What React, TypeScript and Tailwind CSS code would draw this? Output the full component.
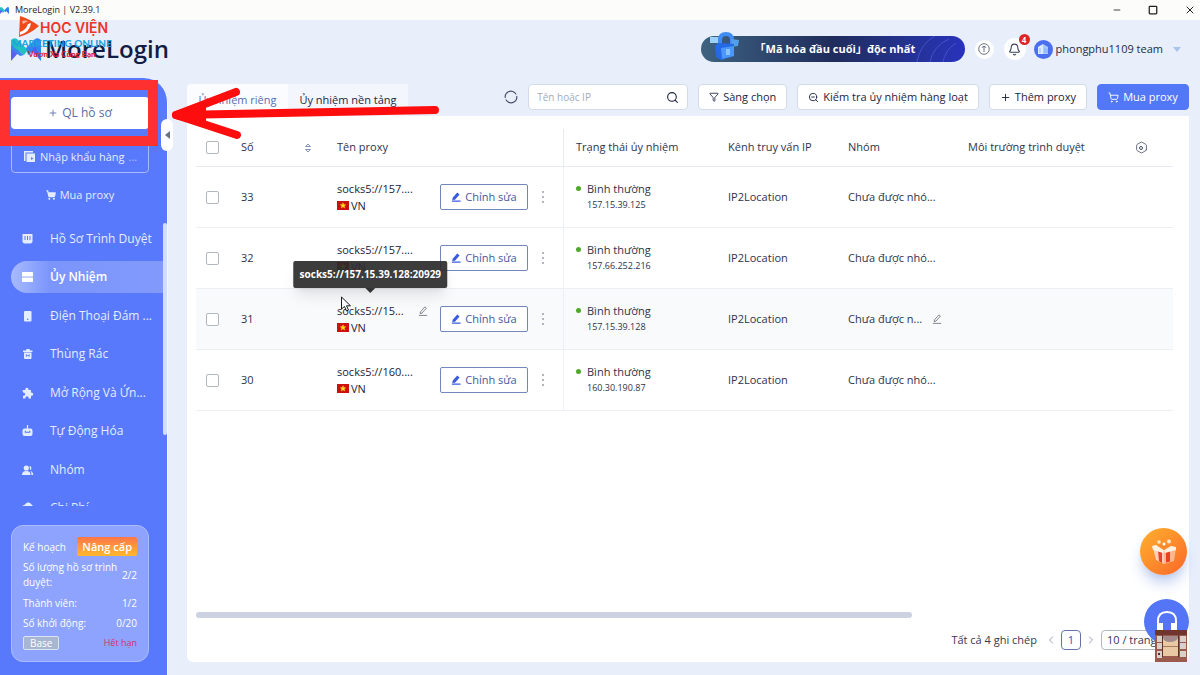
import type { ReactNode } from 'react';
import { clsx } from 'clsx';
import {
  Bell,
  ChevronLeft,
  ChevronRight,
  Filter,
  Hexagon,
  Minus,
  Plus,
  Search,
  ShoppingCart,
  Square,
  X,
  ZoomOut,
} from 'lucide-react';

interface ProxyRow {
  id: number;
  name: string;
  ip: string;
  group: string;
  hovered?: boolean;
}

const PROXIES: ProxyRow[] = [
  { id: 33, name: 'socks5://157....', ip: '157.15.39.125', group: 'Chưa được nhó...' },
  { id: 32, name: 'socks5://157....', ip: '157.66.252.216', group: 'Chưa được nhó...' },
  { id: 31, name: 'socks5://15...', ip: '157.15.39.128', group: 'Chưa được n...', hovered: true },
  { id: 30, name: 'socks5://160....', ip: '160.30.190.87', group: 'Chưa được nhó...' },
];

const NAV_ITEMS: { label: string; icon: ReactNode; active?: boolean }[] = [
  {
    label: 'Hồ Sơ Trình Duyệt',
    icon: (
      <>
        <path d="M1 1h10v8L9.500 10.500h-7L1 9z" />
        <path d="M3.500 3v4M6 3v4M8.500 3v4" stroke="#5879fb" strokeWidth="1" />
      </>
    ),
  },
  {
    label: 'Ủy Nhiệm',
    active: true,
    icon: (
      <>
        <rect x="0.500" y="1" width="11" height="4.600" rx="0.600" />
        <rect x="0.500" y="6.400" width="11" height="4.600" rx="0.600" />
      </>
    ),
  },
  {
    label: 'Điện Thoại Đám ...',
    icon: (
      <>
        <rect x="2.500" y="1" width="7.500" height="10.500" rx="1" />
        <circle cx="6.200" cy="9.300" r="0.800" fill="#5879fb" />
      </>
    ),
  },
  {
    label: 'Thùng Rác',
    icon: (
      <>
        <path d="M1.500 2.500h3L5 1h3l.5 1.500h2.500V4h-9.500zM2.500 4.500h7.500V10q0 1-1 1H3.500q-1 0-1-1z" />
        <path d="M4.800 6v3M7.600 6v3M4.500 7.500h3.500" stroke="#5879fb" strokeWidth="0.700" />
      </>
    ),
  },
  {
    label: 'Mở Rộng Và Ứn...',
    icon: (
      <path d="M1 3h2.800a1.700 1.700 0 1 1 3.200 0H9.500v2.700a1.600 1.600 0 1 1 0 3v2.800H7a1.600 1.600 0 1 0-3 0H1.500V8.700a1.600 1.600 0 1 0 0-3z" />
    ),
  },
  {
    label: 'Tự Động Hóa',
    icon: (
      <>
        <path d="M5.400 0h1.200v3.500H5.400zM3 3.500h6q2 0 2 2V9q0 2-2 2H3q-2 0-2-2V5.500q0-2 2-2z" />
        <path d="M3.800 5.800v1.500h4.400V5.800" fill="none" stroke="#5879fb" strokeWidth="1.100" />
      </>
    ),
  },
  {
    label: 'Nhóm',
    icon: (
      <>
        <circle cx="4.800" cy="4" r="2.600" />
        <path d="M.5 11q0-4 4.300-4t4.300 4zM8 1.800a2.400 2.400 0 0 1 .6 4.500zM9 7q2.700.8 2.700 4H10Q10 8.500 9 7z" />
      </>
    ),
  },
  {
    label: 'Chi Phí',
    icon: <path d="M.5 4 3.500 2.500Q5 0 7 0.500q2 0 2.500 1.500L11.500 4v5h-11z" />,
  },
];

function ToolButton({ children, primary }: { children: ReactNode; primary?: boolean }) {
  return (
    <button
      type="button"
      className={clsx(
        'flex h-[26px] items-center justify-center gap-1 whitespace-nowrap rounded-sm border text-[11px] font-medium',
        primary
          ? 'w-[92px] border-[#5278f8] bg-[#5278f8] text-white'
          : 'border-[#d3dbe9] bg-white px-2.5 text-[#1d2340]',
      )}
    >
      {children}
    </button>
  );
}

function PenLine({ className }: { className?: string }) {
  return (
    <svg viewBox="0 0 12 12" className={className} fill="none" stroke="currentColor" strokeWidth="0.900">
      <path d="M2.500 9.200 3 7l5.300-6 1.800 1.500-5.300 6zM1 11.300h10" />
    </svg>
  );
}

function PenSolid() {
  return (
    <svg viewBox="0 0 12 12" className="size-2.5 text-[#3a5be0]" fill="currentColor">
      <path d="M1.500 9.500 2 7l5.500-6.300L10.300 3 4.800 9.200zM1 10.300h10.500v1.300H1z" />
    </svg>
  );
}

function VnFlag() {
  return (
    <svg viewBox="0 0 12 9" className="h-[9px] w-3">
      <rect width="12" height="9" fill="#cc1010" />
      <path d="m6 1.800.7 1.900h2L7.100 4.900l.6 2L6 5.700 4.300 6.900l.6-2-1.600-1.200h2z" fill="#ffe11a" stroke="#ffe11a" strokeWidth="0.500" />
    </svg>
  );
}

function BrandMark({ className }: { className?: string }) {
  return (
    <svg viewBox="0 0 30 23" className={className}>
      <path d="M0 23V9l4-5 5 9z" fill="#5b63ee" />
      <path d="M0 11V2q3-3 6-1l11 11-4 5-5-4z" fill="#25bfc0" />
      <path d="M0 11V7l13 10-4 1z" fill="#3a86ee" />
      <path d="M30 23V2q-3-3-6-1l-9 9 2 7 6-4z" fill="#2f86f2" />
      <path d="M30 23 21 13l3-6z" fill="#4a62f0" />
    </svg>
  );
}

function TitleBar() {
  return (
    <div className="flex h-5 items-center justify-between bg-[#fcfcfa] text-[#1e1e1e]">
      <div className="flex items-center gap-1.5 text-[9px] font-medium">
        <BrandMark className="h-[7px] w-[9px]" />
        <span>MoreLogin | V2.39.1</span>
      </div>
      <div className="flex items-center gap-[26px] pr-1">
        <button type="button" aria-label="Minimize"><Minus size={10} strokeWidth={2} /></button>
        <button type="button" aria-label="Maximize"><Square size={10} strokeWidth={3} /></button>
        <button type="button" aria-label="Close"><X size={12} strokeWidth={2} /></button>
      </div>
    </div>
  );
}

// Academy watermark stamped over the app logo
function Watermark() {
  return (
    <div className="pointer-events-none absolute left-3 top-4 font-[Lato,sans-serif] font-black">
      <svg viewBox="0 0 22 22" className="absolute left-1.5 top-0 size-[22px]">
        <path d="M2 0q10 3 19 10Q12 18 1 21z" fill="#f04a1c" />
        <path d="M2 16Q8 14 10 8l3-1q-1 9-11 12z" fill="#fff" />
        <path d="M4 5q3-1 6 0l-5 3z" fill="#ffb39a" />
      </svg>
      <p className="pl-7 pt-1 font-[Inter,sans-serif] text-[14px] leading-4 font-semibold text-[#ee3524]">HỌC VIỆN</p>
      <p className="text-[10px] leading-3.5 text-[#20a3e0]">MARKETING ONLINE</p>
      <p className="pl-4 text-[8px] leading-2 text-[#dd2431]">Vươn Xa Cùng Bạn</p>
    </div>
  );
}

function Header() {
  return (
    <header className="relative flex h-[58px] items-center justify-between pl-[11px] pr-[19px]">
      <div className="flex items-center gap-1">
        <BrandMark className="h-[23px] w-[30px]" />
        <span className="text-[24px] leading-8 font-semibold text-[#131c46]">MoreLogin</span>
      </div>
      <div className="flex items-center">
        <a
          href="#encryption"
          className="relative mr-2.5 flex h-[26px] w-[264px] items-center rounded-full bg-linear-to-r from-[#3e6380] via-[#202c5c] to-[#2932bd] pl-[54px] text-[11px] font-bold text-white"
        >
          <svg viewBox="0 0 32 28" className="absolute -top-1 left-2 h-7 w-8">
            <path d="M1 5h10v6H1z" fill="#9bd0fb" />
            <path d="M11 13V8q0-6 6-6t6 6v4" fill="none" stroke="#3f8cf5" strokeWidth="4" />
            <path d="M22 7l8 1-1 6-6 1z" fill="#559ee9" />
            <path d="M6 14l3-3 16 1v12l-13 4-5-3z" fill="#2568e8" />
            <path d="M12 16l13-2v10l-12 3z" fill="#4b97fb" />
            <path d="M17 17h4v6h-4z" fill="#8cc2ff" />
          </svg>
          「Mã hóa đầu cuối」độc nhất
          <svg viewBox="0 0 60 26" className="absolute right-0 top-0 h-[26px] w-[60px]" fill="none" stroke="#4153c8">
            <path d="M12 26Q15 8 30 0M25 26Q28 10 44 3M38 26q2-12 13-19" />
          </svg>
        </a>
        <button type="button" aria-label="Tải lên" className="mr-2.5 flex size-[19px] items-center justify-center rounded-full bg-white text-[#4a5168]">
          <svg viewBox="0 0 12 12" className="size-3" fill="none" stroke="currentColor" strokeWidth="0.800">
            <circle cx="6" cy="6" r="5.300" />
            <path d="M3.800 4.500 6 3.300l2.200 1.200M6 3.500V9" />
          </svg>
        </button>
        <button type="button" aria-label="Thông báo" className="relative mr-2 flex size-[22px] items-center justify-center rounded-full bg-white text-[#3b415b]">
          <Bell size={13} strokeWidth={2} />
          <span className="absolute -top-1 -right-1 flex size-[11px] items-center justify-center rounded-full bg-[#dc2626] text-[8px] font-bold text-white">4</span>
        </button>
        <button type="button" className="flex items-center gap-0.5 text-[11px] text-[#252b43]">
          <span className="mr-px flex size-[19px] items-center justify-center rounded-full bg-[#4c6ff0]">
            <svg viewBox="0 0 12 12" className="size-3">
              <path d="M1 4l5-3v10H1z" fill="#dcecff" />
              <path d="M6 1l5 3v7H6z" fill="#a7cbff" />
              <path d="M3 5v5M8 5v5M10 6v4" stroke="#6f97f4" strokeWidth="0.600" />
            </svg>
          </span>
          phongphu1109 team
          <svg viewBox="0 0 8 5" className="ml-2 h-[5px] w-2" fill="#a9c3ea"><path d="M0 0h8L4 5z" /></svg>
        </button>
      </div>
    </header>
  );
}

function PlanCard() {
  return (
    <section className="mr-[18px] ml-[11px] mb-[13px] flex h-[137px] flex-col justify-between rounded-xl border border-[#a9bcfd] bg-[#8ea3fd] px-[11px] pt-[11px] pb-2.5 text-[10px] leading-4 font-medium text-white">
      <div className="flex items-center justify-between">
        Kế hoạch
        <button type="button" className="h-[19px] rounded-xs bg-linear-to-b from-[#ff7548] to-[#ffb829] px-[5px] text-[11px] font-semibold">Nâng cấp</button>
      </div>
      <div className="flex items-center justify-between">
        <span className="leading-[15px]">Số lượng hồ sơ trình<br />duyệt:</span>
        <span>2/2</span>
      </div>
      <div className="flex justify-between"><span>Thành viên:</span><span>1/2</span></div>
      <div className="flex justify-between"><span>Số khởi động:</span><span>0/20</span></div>
      <div className="flex items-center justify-between">
        <span className="flex h-3.5 items-center rounded-xs border border-[#dbe4f4] bg-[#a7b6d3] px-1.5">Base</span>
        <span className="text-[9px] text-[#d92e6b]">Hết hạn</span>
      </div>
    </section>
  );
}

function Sidebar() {
  return (
    <aside className="relative flex w-[168px] shrink-0 flex-col rounded-tr-3xl border-r border-[#f3f7ff] bg-[#5879fb] text-[#e3edff]">
      <div className="flex flex-col items-stretch gap-3 pt-[19px] pr-[18px] pl-[11px]">
        <button type="button" className="flex h-8 items-center justify-center gap-1 rounded-sm bg-white text-[12px] text-[#5a6ba6]">
          <Plus size={10} strokeWidth={2} /> QL hồ sơ
        </button>
        <button type="button" className="flex h-8 items-center gap-1 rounded-sm border border-[#a7bbfd] pl-3 text-[11px] font-medium">
          <svg viewBox="0 0 12 12" className="size-3" fill="currentColor">
            <path d="M0 0h9v1.500H1.500V10H0z" />
            <path d="M2.500 2.500H11V11H2.500z" />
            <path d="M7 6v3l2.500-1.500z" fill="#5879fb" />
          </svg>
          Nhập khẩu hàng <span className="opacity-60">...</span>
        </button>
        <button type="button" className="flex h-5 items-center justify-center gap-1 text-[11px] font-medium">
          <ShoppingCart size={10} strokeWidth={3} fill="currentColor" /> Mua proxy
        </button>
      </div>
      <nav className="mt-[18px] h-[283px] overflow-hidden">
        <ul className="flex h-[301px] flex-col justify-between">
          {NAV_ITEMS.map((item) => (
            <li key={item.label}>
              <a
                href="#nav"
                className={clsx(
                  'ml-[11px] flex h-8 items-center gap-4 rounded-l-full pl-2.5 text-[12px]',
                  item.active && 'bg-linear-to-r from-[#a8bafd] via-[#7b95fc] via-25% to-[#829afc] font-semibold text-white',
                )}
              >
                <svg viewBox="0 0 12 12" className="h-3 w-[13px]" fill="currentColor">{item.icon}</svg>
                <span className="whitespace-nowrap">{item.label}</span>
              </a>
            </li>
          ))}
        </ul>
      </nav>
      <div className="mt-auto"><PlanCard /></div>
      <span className="absolute top-[145px] right-0 h-[212px] w-1 rounded-full bg-[#cfdefc]" />
      <button type="button" aria-label="Thu gọn" className="absolute top-[41px] -right-1.5 flex h-8 w-3 items-center justify-center rounded-full bg-white">
        <svg viewBox="0 0 5 8" className="h-2 w-[5px]" fill="#6c7180"><path d="M5 0v8L0 4z" /></svg>
      </button>
    </aside>
  );
}

function Toolbar() {
  return (
    <div className="flex items-start justify-between pt-1.5">
      <div role="tablist" className="flex h-8 text-[11px] font-medium whitespace-nowrap">
        <button type="button" role="tab" aria-selected className="w-[101px] rounded-tl-sm bg-[#fbfcff] text-[#5a6db0]">Ủy nhiệm riêng</button>
        <button type="button" role="tab" aria-selected={false} className="w-[120px] bg-[#f3f6fd] text-[#23283d]">Ủy nhiệm nền tảng</button>
      </div>
      <div className="flex items-center gap-2.5">
        <button type="button" aria-label="Làm mới" className="text-[#4a5067]">
          <svg viewBox="0 0 14 14" className="size-3.5" fill="none" stroke="currentColor" strokeWidth="1.100">
            <path d="M1.300 8A5.700 5.700 0 0 1 10.500 2.500l1.800 2M12.700 6A5.700 5.700 0 0 1 3.500 11.500l-1.800-2" />
          </svg>
        </button>
        <label className="flex h-[26px] w-40 items-center rounded-sm border border-[#d3dbe9] bg-white px-2">
          <input type="text" placeholder="Tên hoặc IP" aria-label="Tên hoặc IP" className="min-w-0 flex-1 text-[10px] outline-none placeholder:text-[#a5abb8]" />
          <Search size={13} strokeWidth={2} className="text-[#1d2340]" />
        </label>
        <ToolButton><Filter size={10} strokeWidth={2} />Sàng chọn</ToolButton>
        <ToolButton><ZoomOut size={11} strokeWidth={2} />Kiểm tra ủy nhiệm hàng loạt</ToolButton>
        <ToolButton><Plus size={11} strokeWidth={2} />Thêm proxy</ToolButton>
        <ToolButton primary><ShoppingCart size={11} strokeWidth={2} />Mua proxy</ToolButton>
      </div>
    </div>
  );
}

function NameTooltip() {
  return (
    <span role="tooltip" className="absolute bottom-full left-1/2 z-10 mb-3.5 w-max -translate-x-1/2 rounded-xs bg-[#2b2b2b]/92 px-1.5 py-[5px] text-[10px] leading-[17px] font-bold text-white shadow-lg">
      socks5://157.15.39.128:20929
      <svg viewBox="0 0 10 5" className="absolute top-full left-1/2 h-[5px] w-2.5 -translate-x-1/2" fill="#333333"><path d="M0 0h10L5 5z" /></svg>
    </span>
  );
}

function ProxyTableRow({ row }: { row: ProxyRow }) {
  return (
    <tr className={clsx('h-[61px] *:border-b *:border-[#eceff4]', row.hovered && 'bg-[#f9fafb]')}>
      <td className="text-center"><CheckBox label={`Chọn ${row.id}`} /></td>
      <td className="pl-[13px]">{row.id}</td>
      <td className="border-r border-r-[#eef0f4] pl-[13px]">
        <div className="flex items-center">
          <div className="w-[103px] leading-[17px] text-[#1b2138]">
            <div className="flex items-center justify-between pr-3">
              <span className="relative font-medium">
                {row.name}
                {row.hovered && <NameTooltip />}
                {row.hovered && (
                  <svg viewBox="0 0 11 16" className="absolute -top-1.5 left-1 h-4 w-[11px]" fill="#fff" stroke="#1b1b1b">
                    <path d="M.5 1v12l3-2.500L5.500 15l2-1-2-4.200h4z" />
                  </svg>
                )}
              </span>
              {row.hovered && <button type="button" aria-label="Sửa tên"><PenLine className="size-2.5 text-[#5c6270]" /></button>}
            </div>
            <div className="flex items-center gap-0.5"><VnFlag />VN</div>
          </div>
          <button type="button" className="flex h-[26px] w-[88px] items-center justify-center gap-1 rounded-xs border border-[#7387bd] bg-white text-[#44589f]">
            <PenSolid />
            Chỉnh sửa
          </button>
          <button type="button" aria-label="Thêm" className="ml-3.5">
            <svg viewBox="0 0 2 14" className="h-3.5 w-0.5" fill="#555b6c">
              <circle cx="1" cy="2" r="0.800" />
              <circle cx="1" cy="7" r="0.800" />
              <circle cx="1" cy="12" r="0.800" />
            </svg>
          </button>
        </div>
      </td>
      <td className="pl-3">
        <div className="flex gap-1.5 leading-4">
          <span className="mt-[5px] size-[5px] rounded-full bg-[#4fa82b]" />
          <div>
            <div>Bình thường</div>
            <div className="text-[9px]">{row.ip}</div>
          </div>
        </div>
      </td>
      <td className="pl-3">IP2Location</td>
      <td className="pl-3 whitespace-nowrap">
        <div className="flex items-center gap-2.5">
          {row.group}
          {row.hovered && <button type="button" aria-label="Sửa nhóm"><PenLine className="size-2.5 text-[#5c6270]" /></button>}
        </div>
      </td>
      <td />
      <td />
    </tr>
  );
}

function CheckBox({ label }: { label: string }) {
  return (
    <input type="checkbox" aria-label={label} className="mx-auto block size-[13px] appearance-none rounded-xs border border-[#b3b7c0] bg-white" />
  );
}

function ProxyTable() {
  return (
    <table className="w-full table-fixed border-separate border-spacing-0 text-left text-[11px] text-[#2d334b]">
      <colgroup>
        <col className="w-8" />
        <col className="w-24" />
        <col className="w-60" />
        <col className="w-[152px]" />
        <col className="w-[120px]" />
        <col className="w-[120px]" />
        <col />
        <col className="w-16" />
      </colgroup>
      <thead>
        <tr className="h-[38px] whitespace-nowrap text-[#2c3350] *:border-b *:border-[#e7eaf0] *:font-medium">
          <th><CheckBox label="Chọn tất cả" /></th>
          <th className="pr-3 pl-[13px]">
            <div className="flex items-center justify-between">
              Số
              <svg viewBox="0 0 8 10" className="h-2.5 w-2" fill="none" stroke="#8195b5"><path d="M1.500 3.500 4 1l2.500 2.500zM1.500 6.500 4 9l2.500-2.500z" /></svg>
            </div>
          </th>
          <th className="border-r border-r-[#eef0f4] pl-[13px]">Tên proxy</th>
          <th className="pl-3">Trạng thái ủy nhiệm</th>
          <th className="pl-3">Kênh truy vấn IP</th>
          <th className="pl-3">Nhóm</th>
          <th className="pl-3">Môi trường trình duyệt</th>
          <th>
            <button type="button" aria-label="Cài đặt cột" className="relative mx-auto flex size-3.5 items-center justify-center text-[#4a5168]">
              <Hexagon size={13} strokeWidth={1.5} />
              <span className="absolute size-1 rounded-full border border-current" />
            </button>
          </th>
        </tr>
      </thead>
      <tbody>
        {PROXIES.map((row) => <ProxyTableRow key={row.id} row={row} />)}
      </tbody>
    </table>
  );
}

function Pagination() {
  return (
    <div className="flex items-center justify-end pr-2.5 pb-3 text-[11px] text-[#343a52]">
      <span className="mr-2">Tất cả 4 ghi chép</span>
      <button type="button" aria-label="Trang trước" className="text-[#9aa0ad]"><ChevronLeft size={12} strokeWidth={2} /></button>
      <button type="button" className="mx-1 size-5 rounded-sm border border-[#6673a8] font-medium text-[#3d4fa5]">1</button>
      <button type="button" aria-label="Trang sau" className="text-[#9aa0ad]"><ChevronRight size={12} strokeWidth={2} /></button>
      <select aria-label="Số dòng mỗi trang" className="ml-1 h-5 w-[78px] appearance-none rounded-sm border border-[#b3b7c2] bg-white pl-[5px]">
        <option>10 / trang</option>
      </select>
    </div>
  );
}

function FloatingActions() {
  return (
    <div className="absolute right-0 bottom-0 flex flex-col items-end gap-6">
      <button type="button" aria-label="Quà tặng" className="mr-0.5 flex size-[47px] items-center justify-center rounded-full bg-linear-to-br from-[#ffb02d] to-[#f9662a] shadow-lg shadow-[#b9c9ef]">
        <svg viewBox="0 0 28 28" className="size-7">
          <path d="M3 10l11 3v13L6 22z" fill="#ffcdb5" />
          <path d="M26 10l-12 3v13l10-3z" fill="#ffb68f" />
          <path d="M8 12l4 1v12l-3-2zM20 11.500l-4 1v12l4-1z" fill="#ea3f28" />
          <path d="M2 8l4-1 8 5-1 3-10-3zM26 9l-5-1-7 4 1 3 11-3z" fill="#fff0df" />
          <path d="M8 8l6-2 6 2-6 4z" fill="#f58a2e" />
          <circle cx="9" cy="4" r="1.800" fill="#ffe8c5" />
          <circle cx="14" cy="6" r="1.500" fill="#fff" />
          <circle cx="19" cy="3.500" r="2" fill="#ffe8c5" />
        </svg>
      </button>
      <button type="button" aria-label="Hỗ trợ" className="mb-[18px] flex size-[45px] items-center justify-center rounded-full bg-[#5475f5]">
        <svg viewBox="0 0 22 24" className="size-6" fill="#fff">
          <path d="M2 14v-3Q2 2 11 2t9 9v3" fill="none" stroke="#fff" strokeWidth="2" />
          <path d="M1 13h6v9H3q-2 0-2-2zM21 13h-6v9h4q2 0 2-2z" />
        </svg>
      </button>
      <svg viewBox="0 0 32 32" className="absolute right-0.5 bottom-0 size-8">
        <rect width="32" height="32" fill="#9a5a4c" />
        <path d="M0 0h32v5H0z" fill="#713530" />
        <path d="M8 6h15v20H8z" fill="#e8c9a4" />
        <path d="M8 6h15v2q-2 4-8 4t-7-4z" fill="#a1898c" />
        <path d="M8 16h15v1H8z" fill="#a87b5c" />
        <path d="M2 6h5v6H2zM2 13h5v6H2zM2 21h5v7H2zM25 6h6v6h-6zM25 13h6v6h-6zM25 21h6v6h-6z" fill="#dbcfc9" />
        <path d="M3 23h2v2H3z" fill="#4a3030" />
        <path d="M7 5h1v22H7zM23 5h1v22h-1z" fill="#5e3028" />
      </svg>
    </div>
  );
}

// Hand-drawn callout pointing at the "QL hồ sơ" button
function Callout() {
  return (
    <div className="pointer-events-none absolute top-20 left-0">
      <div className="h-[66px] w-[158px] border-10 border-[#ff3030]" />
      <svg viewBox="0 0 275 60" className="absolute top-1.5 left-[168px] h-[60px] w-[275px]" fill="none" stroke="#fd0d0d" strokeWidth="8" strokeLinecap="round" strokeLinejoin="round">
        <path d="M267 24 8 29M68 6 8 29l61 20" />
        <path d="M8 29 34 21v14z" fill="#fd0d0d" />
      </svg>
    </div>
  );
}

export default function App() {
  return (
    <div className="relative flex min-h-screen flex-col bg-[#e8effb] font-['Open_Sans','Noto_Sans','Noto_Sans_CJK_JP',sans-serif]">
      <TitleBar />
      <Header />
      <div className="flex flex-1">
        <Sidebar />
        <main className="relative mr-[11px] mb-[13px] ml-[19px] flex min-w-0 flex-1 flex-col">
          <Toolbar />
          <div className="flex flex-1 flex-col rounded-b-md bg-white pt-[13px]">
            <div className="flex-1 pr-4 pl-[9px]">
              <ProxyTable />
            </div>
            <div className="mb-3 ml-[9px] h-1.5 w-5/7 rounded-full bg-[#ccd2e2]" />
            <Pagination />
          </div>
          <FloatingActions />
        </main>
      </div>
      <Watermark />
      <Callout />
    </div>
  );
}
